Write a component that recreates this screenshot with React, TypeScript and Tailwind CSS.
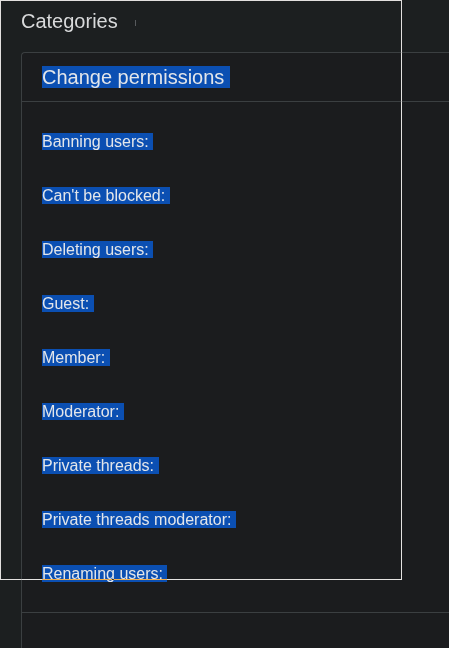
const perms = [
  'Banning users:',
  "Can't be blocked:",
  'Deleting users:',
  'Guest:',
  'Member:',
  'Moderator:',
  'Private threads:',
  'Private threads moderator:',
  'Renaming users:',
]

// selected-text look: blue box with a trailing space
function Sel({ children }: { children: string }) {
  return <span className="bg-[#0b4fb2] text-[#e3e6ea]">{children}&nbsp;</span>
}

export default function App() {
  return (
    <div
      className="relative h-[648px] w-[449px] overflow-hidden bg-[#1c1f20]"
      style={{ fontFamily: '"Liberation Sans", Arial, sans-serif' }}
    >
      <div className="flex items-center pl-[21px] pt-[10px]">
        <h1 className="text-[20px] leading-[23px] text-[#d9dadb]">Categories</h1>
        <span className="ml-[17px] mt-[2px] h-[6px] w-px bg-[#575a5d]" />
      </div>

      <div className="ml-[21px] mt-[19px] w-[520px] rounded-tl-[4px] border-l border-t border-[#3b3f41] bg-[#1b1c1e]">
        <div className="border-b border-[#3b3f41] px-[20px] py-[12px] text-[20px] leading-[24px]">
          <Sel>Change permissions</Sel>
        </div>
        <div className="flex flex-col gap-[36px] border-b border-[#3b3f41] px-[20px] pb-[29px] pt-[31px] text-[16px] leading-[18px]">
          {perms.map(p => (
            <div key={p}>
              <Sel>{p}</Sel>
            </div>
          ))}
        </div>
        <div className="h-[60px]" />
      </div>

      {/* outline box drawn over the page */}
      <div className="pointer-events-none absolute left-0 top-0 h-[580px] w-[402px] border border-white mix-blend-difference" />
    </div>
  )
}
